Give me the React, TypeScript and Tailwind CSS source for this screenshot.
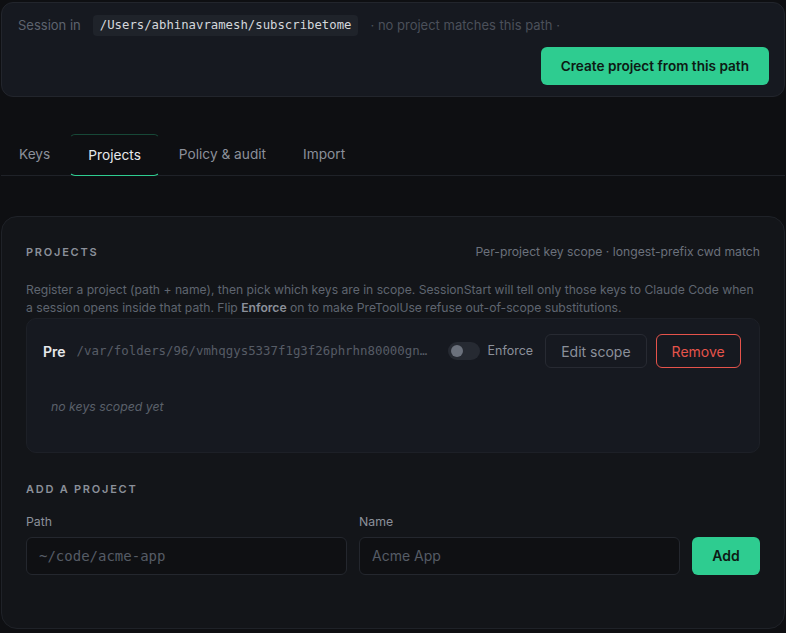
import React from "react";

const mono = "font-['DejaVu_Sans_Mono',monospace]";

const tabs = ["Keys", "Projects", "Policy & audit", "Import"];

export default function App() {
  return (
    <div className="min-h-[633px] bg-[#0e0f12] px-px pt-[2px] font-['Inter',sans-serif] text-[#9ca3af]">
      {/* session banner */}
      <div className="rounded-xl border border-[#22252c] bg-[#161920] pl-[16px] pr-[15px] pt-[12px] pb-[11px]">
        <div className="flex items-center gap-[12px] text-[13px]">
          <span className="text-[#5d636e]">Session in</span>
          <code className={`${mono} rounded bg-[#1f232a] px-[7px] py-[1px] text-[12.3px] leading-[19px] text-[#d4d7dc]`}>
            /Users/abhinavramesh/subscribetome
          </code>
          <span className="text-[13px] text-[#4b505a]">· no project matches this path ·</span>
        </div>
        <div className="mt-[11px] flex justify-end">
          <button className="h-[38px] whitespace-nowrap rounded-md bg-[#2ecc90] px-[20px] text-[13.6px] font-semibold text-[#0d1a14]">
            Create project from this path
          </button>
        </div>
      </div>

      {/* tabs */}
      <div className="mt-[37px] flex gap-[1px] border-b border-[#1f2228]">
        {tabs.map((t) => (
          <div
            key={t}
            className={
              t === "Projects"
                ? "-mb-px flex h-[42px] items-center rounded-md border border-x-transparent border-t-[#2ecc90]/30 border-b-[#2ecc90] px-[18px] text-[13.7px] text-[#e6e8eb]"
                : "flex h-[41px] items-center px-[18px] text-[13.7px] text-[#8b909a]"
            }
          >
            {t}
          </div>
        ))}
      </div>

      {/* projects card */}
      <div className="mt-[40px] rounded-2xl border border-[#1f2228] bg-[#131519] px-[24px] pt-[26px] pb-[53px]">
        <div className="flex items-center justify-between">
          <h2 className="text-[11px] font-semibold tracking-[0.16em] text-[#8b909a]">PROJECTS</h2>
          <span className="text-[12.2px] text-[#6b717c]">Per-project key scope · longest-prefix cwd match</span>
        </div>
        <p className="mt-[20px] text-[12.15px] leading-[18px] text-[#5f6570]">
          Register a project (path + name), then pick which keys are in scope. SessionStart will tell only those keys to
          Claude Code when a session opens inside that path. Flip{" "}
          <b className="font-semibold text-[#8b909a]">Enforce</b> on to make PreToolUse refuse out-of-scope substitutions.
        </p>

        <div className="mt-[1px] rounded-[10px] border border-[#1d2027] bg-[#161920] pl-[16px] pr-[17px] pt-[15px] pb-[35px]">
          <div className="flex items-center">
            <span className="shrink-0 text-[14px] font-semibold text-[#e6e8eb]">Pre</span>
            <span className={`${mono} ml-[11px] w-[356px] shrink-0 truncate text-[12.4px] text-[#565c66]`}>
              /var/folders/96/vmhqgys5337f1g3f26phrhn80000gn/T/tmp.pre
            </span>
            <span className="ml-[15px] flex h-[18px] w-[32px] shrink-0 items-center rounded-full bg-[#262a32] px-[3px]">
              <span className="h-[12px] w-[12px] rounded-full bg-[#6b717c]" />
            </span>
            <span className="ml-[8px] shrink-0 text-[12.5px] text-[#8b909a]">Enforce</span>
            <button className="ml-[12px] h-[34px] shrink-0 whitespace-nowrap rounded-md border border-[#272a32] px-[15px] text-[14px] text-[#8b909a]">
              Edit scope
            </button>
            <button className="ml-[9px] h-[34px] shrink-0 whitespace-nowrap rounded-md border border-[#e5534b] px-[15px] text-[14px] text-[#e5534b]">
              Remove
            </button>
          </div>
          <p className="mt-[30px] pl-[8px] text-[12.3px] italic text-[#5a606a]">no keys scoped yet</p>
        </div>

        <h2 className="mt-[28px] text-[11px] font-semibold tracking-[0.16em] text-[#8b909a]">ADD A PROJECT</h2>
        <div className="mt-[16px] flex items-end gap-[12px]">
          <label className="flex flex-1 flex-col gap-[5px]">
            <span className="text-[12.3px] text-[#8b909a]">Path</span>
            <input
              placeholder="~/code/acme-app"
              className={`${mono} h-[38px] rounded-md border border-[#24272e] bg-[#0f1013] px-[12px] text-[14px] text-[#c9ccd1] outline-none placeholder:text-[#565c66]`}
            />
          </label>
          <label className="flex flex-1 flex-col gap-[5px]">
            <span className="text-[12.3px] text-[#8b909a]">Name</span>
            <input
              placeholder="Acme App"
              className="h-[38px] rounded-md border border-[#24272e] bg-[#0f1013] px-[12px] text-[14px] text-[#c9ccd1] outline-none placeholder:text-[#565c66]"
            />
          </label>
          <button className="h-[38px] w-[68px] shrink-0 rounded-md bg-[#2ecc90] text-[14px] font-semibold text-[#0d1a14]">
            Add
          </button>
        </div>
      </div>
    </div>
  );
}
